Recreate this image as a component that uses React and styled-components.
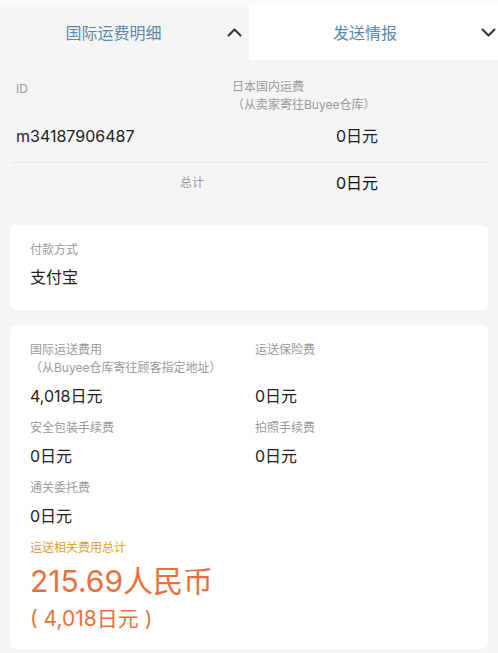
import * as React from "react";
import styled, { createGlobalStyle } from "styled-components";

const GlobalStyle = createGlobalStyle`
  body {
    margin: 0;
    background: #f5f5f5;
    font-family: Inter, "Noto Sans CJK SC", "Noto Sans", sans-serif;
    color: #222;
  }
`;

const Page = styled.div`
  display: flex;
  flex-direction: column;
  width: 498px;
  min-height: 653px;
  background: #f5f5f5;
`;

const TopStrip = styled.div`
  height: 5px;
  background: #fbfbfb;
`;

const Tabs = styled.div`
  display: grid;
  grid-template-columns: 249px 1fr;
  height: 55px;
`;

const Tab = styled.div`
  display: flex;
  align-items: center;
  padding-right: ${(p) => p.$padRight}px;
  background: ${(p) => (p.$open ? "#f5f5f5" : "#ffffff")};
`;

const TabLabel = styled.span`
  flex: 1;
  text-align: center;
  font-size: 16px;
  color: #5a89ad;
  margin-top: -2px;
`;

const Chevron = styled.svg`
  width: 15px;
  height: 9px;
  fill: none;
  stroke: #333;
  stroke-width: 2;
  stroke-linecap: round;
  stroke-linejoin: round;
`;

const Detail = styled.div`
  display: flex;
  flex-direction: column;
  padding: 18px 10px 0;
`;

const DetailRow = styled.div`
  display: grid;
  grid-template-columns: 216px 1fr;
  padding-left: 6px;
  margin-top: ${(p) => p.$top || 0}px;
`;

const SmallLabel = styled.div`
  font-size: 12px;
  line-height: 18px;
  color: #9a9a9a;
  padding-top: ${(p) => p.$nudge || 0}px;
  text-align: ${(p) => (p.$right ? "right" : "left")};
  padding-right: ${(p) => (p.$right ? 28 : 0)}px;
  align-self: center;
`;

const DetailValue = styled.div`
  font-size: 16px;
  line-height: 24px;
  color: ${(p) => (p.$strong ? "#111" : "#222")};
  padding-left: ${(p) => p.$indent || 0}px;
`;

const Divider = styled.div`
  height: 1px;
  margin: 14px 2px 0;
  background: #e6e6e6;
`;

const Card = styled.div`
  margin: ${(p) => p.$top}px 10px 0;
  padding: 16px 20px ${(p) => p.$bottom}px;
  background: #fff;
  border-radius: 6px;
`;

const Value = styled.div`
  font-size: 16px;
  line-height: 22px;
  margin-top: ${(p) => p.$gap}px;
  color: #222;
`;

const FeeGrid = styled.div`
  display: grid;
  grid-template-columns: 225px 1fr;
  row-gap: 12px;
`;

const Fee = styled.div`
  display: flex;
  flex-direction: column;
  justify-content: space-between;
`;

const Summary = styled.div`
  grid-column: 1 / -1;
  display: flex;
  flex-direction: column;
`;

const SummaryLabel = styled.div`
  font-size: 12px;
  line-height: 18px;
  color: #e0a126;
`;

const SummaryAmount = styled.div`
  margin-top: 6px;
  font-size: 30px;
  line-height: 36px;
  color: #e8713b;
`;

const SummaryYen = styled.div`
  margin-top: 6px;
  font-size: 21px;
  line-height: 28px;
  color: #e8713b;
`;

const ChevronIcon = ({ up }) => (
  <Chevron viewBox="0 0 15 9">
    <polyline points={up ? "1.5,7.5 7.5,1.5 13.5,7.5" : "1.5,1.5 7.5,7.5 13.5,1.5"} />
  </Chevron>
);

const fees = [
  { label: ["国际运送费用", "（从Buyee仓库寄往顾客指定地址）"], value: "4,018日元" },
  { label: ["运送保险费"], value: "0日元" },
  { label: ["安全包装手续费"], value: "0日元" },
  { label: ["拍照手续费"], value: "0日元" },
  { label: ["通关委托费"], value: "0日元" },
];

export default function App() {
  return (
    <Page>
      <GlobalStyle />
      <TopStrip />
      <Tabs>
        <Tab $open $padRight={7}>
          <TabLabel>国际运费明细</TabLabel>
          <ChevronIcon up />
        </Tab>
        <Tab $padRight={2}>
          <TabLabel>发送情报</TabLabel>
          <ChevronIcon />
        </Tab>
      </Tabs>

      <Detail>
        <DetailRow>
          <SmallLabel $nudge={2} style={{ alignSelf: "start" }}>ID</SmallLabel>
          <SmallLabel>
            日本国内运费
            <br />
            （从卖家寄往Buyee仓库）
          </SmallLabel>
        </DetailRow>
        <DetailRow $top={10}>
          <DetailValue>m34187906487</DetailValue>
          <DetailValue $indent={104}>0日元</DetailValue>
        </DetailRow>
        <Divider />
        <DetailRow $top={8}>
          <SmallLabel $right>总计</SmallLabel>
          <DetailValue $indent={104} $strong>0日元</DetailValue>
        </DetailRow>
      </Detail>

      <Card $top={30} $bottom={22}>
        <SmallLabel>付款方式</SmallLabel>
        <Value $gap={7}>支付宝</Value>
      </Card>

      <Card $top={15} $bottom={16}>
        <FeeGrid>
          {fees.map((fee) => (
            <Fee key={fee.label[0]}>
              <SmallLabel style={{ alignSelf: "stretch" }}>
                {fee.label.map((line) => (
                  <div key={line}>{line}</div>
                ))}
              </SmallLabel>
              <Value $gap={8}>{fee.value}</Value>
            </Fee>
          ))}
          <Summary>
            <SummaryLabel>运送相关费用总计</SummaryLabel>
            <SummaryAmount>215.69人民币</SummaryAmount>
            <SummaryYen>( 4,018日元 )</SummaryYen>
          </Summary>
        </FeeGrid>
      </Card>
    </Page>
  );
}
